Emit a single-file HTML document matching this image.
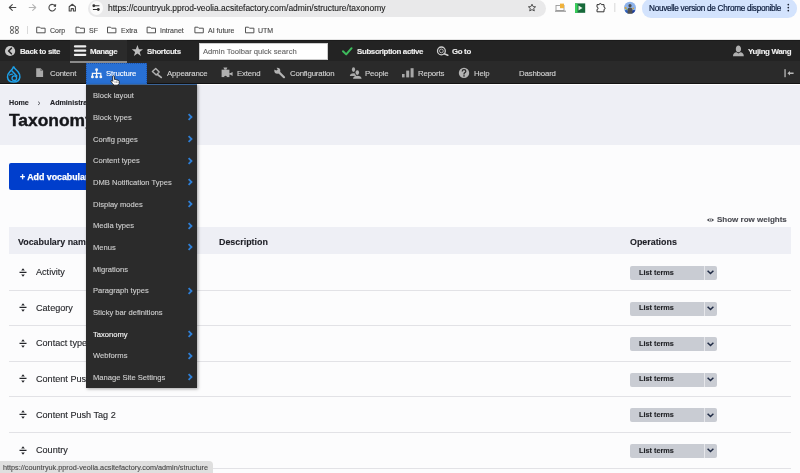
<!DOCTYPE html>
<html><head><meta charset="utf-8">
<style>
*{margin:0;padding:0;box-sizing:border-box}
html,body{width:800px;height:473px;overflow:hidden;background:#fcfcfd;font-family:"Liberation Sans",sans-serif;position:relative}
.a,.mi,.lt .t{will-change:transform;-webkit-text-stroke:0.12px currentColor}
.a{position:absolute;white-space:nowrap}
/* chrome */
#chrome{position:absolute;left:0;top:0;width:800px;height:40px;background:#fdfdfd;border-bottom:1px solid #e4e4e4}
#url{position:absolute;left:87.5px;top:-0.5px;width:458px;height:17px;border-radius:8.5px;background:#e9e9ea}
#urlcirc{position:absolute;left:89.5px;top:1px;width:13.5px;height:13.5px;border-radius:50%;background:#fafafa}
#urltxt{left:107.5px;top:2px;font-size:8.45px;line-height:12px;color:#1f1f1f}
.bm{font-size:7px;color:#474747;top:25.5px;line-height:9px}
#pill{position:absolute;left:642px;top:-1px;width:155px;height:18.5px;border-radius:9px;background:#d3e3fd}
#pilltxt{left:649px;top:2.6px;font-size:8.2px;letter-spacing:-0.28px;line-height:11px;color:#0a1a3a;-webkit-text-stroke:0.2px #0a1a3a}
/* toolbar */
#tb1{position:absolute;left:0;top:40px;width:800px;height:21px;background:#232323;border-top:1px solid #1b1b1b}
#tb2{position:absolute;left:0;top:61px;width:800px;height:23.4px;background:#2a2a2a;border-bottom:1px solid #131313}
.t1{font-size:7.9px;letter-spacing:-0.35px;font-weight:bold;color:#f0f0f0;top:46.8px;line-height:9px}
.t2{font-size:7.8px;letter-spacing:-0.15px;color:#d2d2d2;top:68.8px;line-height:9px}
#manage{position:absolute;left:69.5px;top:40px;width:57.5px;height:21px;background:#2b2b2b}
#managebar{position:absolute;left:69.5px;top:61px;width:57.5px;height:1.6px;background:#8a8a8a}
#search{position:absolute;left:199px;top:43px;width:129px;height:17px;background:#fff;border:1px solid #ccc}
#structtab{position:absolute;left:86px;top:62.5px;width:61px;height:22px;background:#2870d4;outline:1px dotted #1c52a8;outline-offset:-1px}
/* page */
#hdr{position:absolute;left:0;top:84.4px;width:800px;height:60.6px;background:#eeeff5;border-top:1.6px solid #fff}
#bc{left:9px;top:98.8px;font-size:7.15px;font-weight:bold;color:#232429;line-height:9px}
#title{left:9.3px;top:110.2px;font-size:17.4px;font-weight:bold;color:#15161a;line-height:20px;-webkit-text-stroke:0.4px #15161a}
#addbtn{position:absolute;left:9px;top:163px;width:120px;height:27px;background:#003ecc;border-radius:2px}
#addtxt{left:20px;top:171.8px;font-size:8.8px;font-weight:bold;color:#fff;line-height:10px;-webkit-text-stroke:0.25px #fff}
#srw{left:716.8px;top:215.4px;font-size:8px;font-weight:bold;color:#4a4b52;line-height:9px}
#thead{position:absolute;left:9px;top:227.2px;width:782px;height:26.8px;background:#eeeff5}
.th{font-size:8.9px;font-weight:bold;color:#1e1f26;top:236.6px;line-height:10px}
.row{position:absolute;left:9px;width:782px;height:1px;background:#e2e2e6}
.cell{font-size:9.1px;color:#26272b;line-height:11px;left:36px}
.lt{position:absolute;left:630px;width:87px;height:14px;background:#c9ccd3;border-radius:2px}
.lt .sep{position:absolute;left:74px;top:0;width:1px;height:14px;background:#e6e7eb}
.lt .t{position:absolute;left:9px;top:1.7px;font-size:7.3px;font-weight:bold;color:#1f2024;line-height:9px}
.drag{position:absolute;left:18.5px;width:8px;height:9px}
/* menu */
#menu{position:absolute;left:86px;top:84px;width:111px;height:304px;background:#2b2b2b;border-top:1px solid #3b6498;box-shadow:1px 1px 3px rgba(0,0,0,.35)}
.mi{position:absolute;left:6.7px;font-size:7.6px;color:#cdcdcd;line-height:10px;white-space:nowrap}
.chev{position:absolute;left:101px;width:6px;height:8px}
#status{position:absolute;left:0;top:461px;width:213px;height:13px;background:#dfdfdf;border-radius:0 4px 0 0}
#stattxt{left:3px;top:462.6px;font-size:7.25px;color:#4a4a4a;line-height:9px}
</style></head><body>
<div id="chrome"></div>
<div id="url"></div>
<div id="urlcirc"></div>
<div class="a" id="urltxt">https://countryuk.pprod-veolia.acsitefactory.com/admin/structure/taxonomy</div>
<div class="a bm" style="left:50px">Corp</div>
<div class="a bm" style="left:89px">SF</div>
<div class="a bm" style="left:121px">Extra</div>
<div class="a bm" style="left:160px">Intranet</div>
<div class="a bm" style="left:208px">AI future</div>
<div class="a bm" style="left:258px">UTM</div>
<div id="pill"></div>
<svg class="a" style="left:0;top:0" width="800" height="40" viewBox="0 0 800 40">
 <g fill="none" stroke="#474747" stroke-width="1.1" stroke-linecap="round" stroke-linejoin="round">
  <path d="M15.8 7.5H9.3M12.3 4.6L9.3 7.5L12.3 10.4"/>
  <path d="M29.2 7.5H35.7M32.7 4.6L35.7 7.5L32.7 10.4" stroke="#b5b5b5"/>
  <path d="M55.2 6.2A3.3 3.3 0 1 0 55.4 8.6"/>
  <path d="M69.2 11V6.8L72.3 4.3L75.4 6.8V11H73.4V8.6H71.2V11Z"/>
  <path d="M93.5 5.75H99M93.3 9.5H98.5" stroke="#333" stroke-width="1"/>
 </g>
 <path d="M54.2 4.6L56.2 4.2L56 6.8L53.6 6.4Z" fill="#474747"/>
 <circle cx="93.8" cy="5.75" r="1.4" fill="#333"/><circle cx="98.3" cy="9.5" r="1.4" fill="#333"/>
 <g fill="none" stroke="#4a4a4a" stroke-width="0.9">
  <rect x="10.5" y="26.5" width="2.9" height="2.9" rx="0.7"/><rect x="15.4" y="26.5" width="2.9" height="2.9" rx="0.7"/>
  <rect x="10.5" y="30.5" width="2.9" height="2.9" rx="0.7"/><rect x="15.4" y="30.5" width="2.9" height="2.9" rx="0.7"/>
 </g>
 <path d="M27.5 26V34" stroke="#d5d5d5" stroke-width="0.9"/>
 <g fill="none" stroke="#4a4a4a" stroke-width="0.95" stroke-linejoin="round">
  <path id="fold" d="M36.7 27.2h3l1 1h4.4v4.6h-8.4z"/>
  <path d="M76 27.2h3l1 1h4.4v4.6h-8.4z"/>
  <path d="M107.5 27.2h3l1 1h4.4v4.6h-8.4z"/>
  <path d="M147.1 27.2h3l1 1h4.4v4.6h-8.4z"/>
  <path d="M194.9 27.2h3l1 1h4.4v4.6h-8.4z"/>
  <path d="M245.5 27.2h3l1 1h4.4v4.6h-8.4z"/>
 </g>
 <path d="M532 4.2L533.1 6.6L535.6 6.8L533.7 8.4L534.3 10.9L532 9.6L529.7 10.9L530.3 8.4L528.4 6.8L530.9 6.6Z" fill="none" stroke="#3f3f3f" stroke-width="0.9" stroke-linejoin="round"/>
 <rect x="556" y="5.5" width="8" height="5" fill="none" stroke="#9a9a9a" stroke-width="0.9"/>
 <path d="M555 11.2H566" stroke="#8a8a8a" stroke-width="1"/>
 <rect x="560" y="3.6" width="4" height="4.6" fill="#f0b23c"/>
 <rect x="575" y="3.4" width="10.2" height="9.4" fill="#16693a"/>
 <path d="M575 3.4h2.6v9.4H575z" fill="#38d05a"/><path d="M578.5 5.5L582.5 8L578.5 10.5Z" fill="#e8f5e8"/>
 <path d="M597 4.6h2.2a1.1 1.1 0 0 1 2.2 0h2.6v2.6a1.1 1.1 0 0 1 0 2.2v2.4h-7v-2.4a1.1 1.1 0 0 0 0-2.2z" fill="none" stroke="#333" stroke-width="1" stroke-linejoin="round"/>
 <path d="M614.8 3V12" stroke="#d8d8d8" stroke-width="1"/>
 <circle cx="630" cy="7.8" r="6" fill="#8db2ea"/>
 <path d="M624.6 10.4Q626.5 9.6 628 10.8L628 13.6A6 6 0 0 1 624.6 10.4Z" fill="#2f5fb8"/>
 <path d="M632 10.6Q634 9.6 635.4 10.4A6 6 0 0 1 632 13.6Z" fill="#1f3f9f"/>
 <circle cx="625.6" cy="8" r="1" fill="#d8a431"/><circle cx="626.8" cy="9.2" r="0.8" fill="#7fb36a"/><circle cx="633.2" cy="8.4" r="0.8" fill="#d8a431"/>
 <circle cx="630" cy="5.7" r="1.6" fill="#4a4a4a"/>
 <path d="M627.6 13.7V9.4Q627.8 7.6 630 7.4Q632.2 7.6 632.4 9.4V13.7Z" fill="#505050"/>
 <circle cx="788.3" cy="4.6" r="0.85" fill="#1d2433"/><circle cx="788.3" cy="7.6" r="0.85" fill="#1d2433"/><circle cx="788.3" cy="10.6" r="0.85" fill="#1d2433"/>
</svg>
<div class="a" id="pilltxt">Nouvelle version de Chrome disponible</div>

<div id="tb1"></div>
<div id="tb2"></div>
<div id="manage"></div>
<div id="managebar"></div>
<div class="a t1" style="left:19.75px">Back to site</div>
<div class="a t1" style="left:89.8px">Manage</div>
<div class="a t1" style="left:146.7px">Shortcuts</div>
<div id="search"></div>
<div class="a" style="left:203px;top:47px;font-size:7.65px;color:#666;line-height:9px">Admin Toolbar quick search</div>
<div class="a t1" style="left:356.8px">Subscription active</div>
<div class="a t1" style="left:452.3px">Go to</div>
<div class="a t1" style="left:748px">Yujing Wang</div>

<div id="structtab"></div>

<svg class="a" style="left:0;top:40px" width="800" height="45" viewBox="0 40 800 45">
 <circle cx="10.1" cy="51" r="5.1" fill="#c8c8c8"/>
 <path d="M11.4 48.2L8.6 51L11.4 53.8" fill="none" stroke="#252525" stroke-width="1.6" stroke-linecap="round" stroke-linejoin="round"/>
 <g stroke="#efefef" stroke-width="2.3" stroke-linecap="round"><path d="M75 46.4H85.2M75 50.7H85.2M75 54.9H85.2"/></g>
 <path d="M137.4 45L138.9 49.2H143L139.7 51.9L140.9 56L137.4 53.5L133.9 56L135.1 51.9L131.8 49.2H135.9Z" fill="#bdbdbd"/>
 <path d="M343 51.2L346.2 54.4L351.6 48.2" fill="none" stroke="#3dbb5c" stroke-width="2" stroke-linecap="round" stroke-linejoin="round"/>
 <circle cx="441.4" cy="50.9" r="3.9" fill="none" stroke="#cfcfcf" stroke-width="1.3"/>
 <circle cx="441.4" cy="50.9" r="1.9" fill="none" stroke="#cfcfcf" stroke-width="0.8"/>
 <path d="M444.2 53.7L447.8 55.2" stroke="#cfcfcf" stroke-width="1.6" stroke-linecap="round"/>
 <circle cx="738.4" cy="49" r="2.6" fill="#b0b0b0"/>
 <path d="M733 56.2Q733 52.5 736.6 52.2L738.4 53.4L740.2 52.2Q743.8 52.5 743.8 56.2Z" fill="#b0b0b0"/>
 <path d="M736.2 48.2Q736.2 45.5 738.4 45.5Q740.6 45.5 740.6 48.2L740.4 51.2Q738.4 53.2 736.4 51.2Z" fill="#b0b0b0"/>
 <!-- drupal drop -->
 <path d="M13.6 66.4C14.3 68.9 16.4 69.8 18 71.7C19.6 73.6 20.1 75.3 19.9 77.1C19.5 80.2 17 82 13.6 82C10.2 82 7.8 80.1 7.5 77.1C7.3 75.1 8.2 73.4 9.8 71.8C11.5 70 13 69 13.6 66.4Z" fill="#27272a" stroke="#1ea1e9" stroke-width="1.5"/>
 <path d="M11.6 70.6L17.2 76.6" stroke="#1ea1e9" stroke-width="1.5"/>
 <path d="M9 75.4Q11 73.6 13 74.2" fill="none" stroke="#1ea1e9" stroke-width="1.2"/>
 <circle cx="14.3" cy="78.2" r="2.3" fill="none" stroke="#1ea1e9" stroke-width="1.3"/>
 <!-- content doc -->
 <path d="M36.2 68.3H40.6L43.1 70.8V77H36.2Z" fill="#a9a9a9"/><path d="M40.4 68.3V71H43.1" fill="#6f6f6f"/>
 <!-- structure sitemap -->
 <g fill="#f6f6f6"><circle cx="96.6" cy="69.8" r="1.45"/><circle cx="92.4" cy="76.9" r="1.45"/><circle cx="96.6" cy="76.9" r="1.45"/><circle cx="100.8" cy="76.9" r="1.45"/></g>
 <path d="M96.6 70.5V76M92.4 76V73.4H100.8V76" fill="none" stroke="#f6f6f6" stroke-width="1.2"/>
 <!-- appearance -->
 <path d="M152.4 71.4L155.7 68.4L159.2 72L156.2 75Z" fill="none" stroke="#b0b0b0" stroke-width="1.4" stroke-linejoin="round"/>
 <path d="M157.8 74.8L161.2 77.4" stroke="#b0b0b0" stroke-width="1.8" stroke-linecap="round"/>
 <!-- extend puzzle -->
 <g fill="#b0b0b0"><rect x="221.6" y="69.7" width="7.8" height="7.4"/><path d="M223.4 67.6H227.4L226.3 69.8H224.5Z"/><path d="M229.3 73.1H230.6L232.6 71.9V75.9L230.6 74.7H229.3Z"/></g>
 <path d="M224 77.2A1.5 1.5 0 0 1 227 77.2Z" fill="#2a2a2a"/>
 <!-- wrench -->
 <circle cx="277.3" cy="70.8" r="3" fill="#b3b3b3"/>
 <path d="M278 71.4L284 77.2" stroke="#b3b3b3" stroke-width="2.2" stroke-linecap="round"/>
 <path d="M273.6 69.2L275.8 67L277.8 69.4L276.4 70.6Z" fill="#2a2a2a"/>
 <!-- people -->
 <g fill="#a9a9a9"><ellipse cx="353.5" cy="69.6" rx="1.6" ry="2.3"/><path d="M349.8 76Q350 73.6 353.5 73.3Q355.4 73.4 356 74.2V76Z"/></g>
 <ellipse cx="357.3" cy="72.7" rx="2.3" ry="2.9" fill="#2a2a2a"/>
 <g fill="#b0b0b0"><ellipse cx="357.3" cy="72.6" rx="1.8" ry="2.4"/><path d="M353 78.8Q353.3 75.9 357.3 75.7Q361.3 75.9 361.6 78.8Z"/></g>
 <!-- reports -->
 <rect x="402" y="74" width="2.6" height="3.4" fill="#a7a7a7"/><rect x="406.2" y="70.6" width="3" height="6.8" fill="#a7a7a7"/><rect x="410.6" y="68.2" width="3" height="9.2" fill="#a7a7a7"/>
 <!-- help -->
 <circle cx="464" cy="72.9" r="5.2" fill="#b4b4b4"/>
 <path d="M462.2 71.4Q462.2 69.6 464 69.6Q465.8 69.6 465.8 71.2Q465.8 72.3 464.6 72.8Q464 73.1 464 74.4" fill="none" stroke="#2a2a2a" stroke-width="1.3"/>
 <rect x="463.3" y="75.2" width="1.4" height="1.4" fill="#2a2a2a"/>
 <!-- collapse -->
 <rect x="784.4" y="69.2" width="1.3" height="8" fill="#b8b8b8"/>
 <path d="M787.4 73.2L790 71V72.4H793.6V74H790V75.4Z" fill="#b8b8b8"/>
</svg>
<div class="a t2" style="left:49.7px">Content</div>
<div class="a t2" style="left:106px;color:#fff">Structure</div>
<div class="a t2" style="left:166.75px">Appearance</div>
<div class="a t2" style="left:236.75px">Extend</div>
<div class="a t2" style="left:289.5px">Configuration</div>
<div class="a t2" style="left:365.3px">People</div>
<div class="a t2" style="left:417.8px">Reports</div>
<div class="a t2" style="left:474px">Help</div>
<div class="a t2" style="left:518.8px">Dashboard</div>

<div id="hdr"></div>
<div class="a" id="bc">Home</div>
<svg class="a" style="left:36px;top:100px" width="6" height="7" viewBox="0 0 6 7"><path d="M2 1.6L4 3.3L2 5" fill="none" stroke="#55565d" stroke-width="0.9"/></svg>
<div class="a" id="bc2" style="left:49.5px;top:98.8px;font-size:7.15px;font-weight:bold;color:#232429;line-height:9px">Administration</div>
<div class="a" id="title">Taxonomy</div>
<div id="addbtn"></div>
<div class="a" id="addtxt">+ Add vocabulary</div>
<svg class="a" style="left:706px;top:217px" width="9" height="6" viewBox="0 0 9 6"><path d="M0.8 3Q4.5 -0.6 8.2 3Q4.5 6.6 0.8 3Z" fill="#4a4b52"/><circle cx="4.5" cy="3" r="1.4" fill="#fcfcfd"/><circle cx="4.5" cy="3" r="0.7" fill="#4a4b52"/></svg>
<div class="a" id="srw">Show row weights</div>
<div id="thead"></div>
<div class="a th" style="left:18px">Vocabulary name</div>
<div class="a th" style="left:218.5px">Description</div>
<div class="a th" style="left:630px">Operations</div>

<div id="rows">
<div class="a cell" style="top:267.10px">Activity</div>
<svg class="drag" style="top:267.50px" viewBox="0 0 8 9"><path d="M4 0.3 L5.8 2.6 H2.2 Z M0.5 3.8 H7.5 V5.1 H0.5 Z M2.2 6.4 H5.8 L4 8.7 Z" fill="#232429"/></svg>
<div class="lt" style="top:266.00px"><div class="t">List terms</div><div class="sep"></div><svg style="position:absolute;left:77px;top:4.4px" width="7" height="5" viewBox="0 0 7 5"><path d="M0.6 0.7 L3.5 3.5 L6.4 0.7" stroke="#1f2a44" stroke-width="1.5" fill="none"/></svg></div>
<div class="row" style="top:289.50px"></div>
<div class="a cell" style="top:302.70px">Category</div>
<svg class="drag" style="top:303.10px" viewBox="0 0 8 9"><path d="M4 0.3 L5.8 2.6 H2.2 Z M0.5 3.8 H7.5 V5.1 H0.5 Z M2.2 6.4 H5.8 L4 8.7 Z" fill="#232429"/></svg>
<div class="lt" style="top:301.60px"><div class="t">List terms</div><div class="sep"></div><svg style="position:absolute;left:77px;top:4.4px" width="7" height="5" viewBox="0 0 7 5"><path d="M0.6 0.7 L3.5 3.5 L6.4 0.7" stroke="#1f2a44" stroke-width="1.5" fill="none"/></svg></div>
<div class="row" style="top:325.10px"></div>
<div class="a cell" style="top:338.30px">Contact type</div>
<svg class="drag" style="top:338.70px" viewBox="0 0 8 9"><path d="M4 0.3 L5.8 2.6 H2.2 Z M0.5 3.8 H7.5 V5.1 H0.5 Z M2.2 6.4 H5.8 L4 8.7 Z" fill="#232429"/></svg>
<div class="lt" style="top:337.20px"><div class="t">List terms</div><div class="sep"></div><svg style="position:absolute;left:77px;top:4.4px" width="7" height="5" viewBox="0 0 7 5"><path d="M0.6 0.7 L3.5 3.5 L6.4 0.7" stroke="#1f2a44" stroke-width="1.5" fill="none"/></svg></div>
<div class="row" style="top:360.70px"></div>
<div class="a cell" style="top:373.90px">Content Push</div>
<svg class="drag" style="top:374.30px" viewBox="0 0 8 9"><path d="M4 0.3 L5.8 2.6 H2.2 Z M0.5 3.8 H7.5 V5.1 H0.5 Z M2.2 6.4 H5.8 L4 8.7 Z" fill="#232429"/></svg>
<div class="lt" style="top:372.80px"><div class="t">List terms</div><div class="sep"></div><svg style="position:absolute;left:77px;top:4.4px" width="7" height="5" viewBox="0 0 7 5"><path d="M0.6 0.7 L3.5 3.5 L6.4 0.7" stroke="#1f2a44" stroke-width="1.5" fill="none"/></svg></div>
<div class="row" style="top:396.30px"></div>
<div class="a cell" style="top:409.50px">Content Push Tag 2</div>
<svg class="drag" style="top:409.90px" viewBox="0 0 8 9"><path d="M4 0.3 L5.8 2.6 H2.2 Z M0.5 3.8 H7.5 V5.1 H0.5 Z M2.2 6.4 H5.8 L4 8.7 Z" fill="#232429"/></svg>
<div class="lt" style="top:408.40px"><div class="t">List terms</div><div class="sep"></div><svg style="position:absolute;left:77px;top:4.4px" width="7" height="5" viewBox="0 0 7 5"><path d="M0.6 0.7 L3.5 3.5 L6.4 0.7" stroke="#1f2a44" stroke-width="1.5" fill="none"/></svg></div>
<div class="row" style="top:431.90px"></div>
<div class="a cell" style="top:445.10px">Country</div>
<svg class="drag" style="top:445.50px" viewBox="0 0 8 9"><path d="M4 0.3 L5.8 2.6 H2.2 Z M0.5 3.8 H7.5 V5.1 H0.5 Z M2.2 6.4 H5.8 L4 8.7 Z" fill="#232429"/></svg>
<div class="lt" style="top:444.00px"><div class="t">List terms</div><div class="sep"></div><svg style="position:absolute;left:77px;top:4.4px" width="7" height="5" viewBox="0 0 7 5"><path d="M0.6 0.7 L3.5 3.5 L6.4 0.7" stroke="#1f2a44" stroke-width="1.5" fill="none"/></svg></div>
<div class="row" style="top:467.50px"></div>
</div>

<div id="menu">
<div class="mi" style="top:6.25px">Block layout</div>
<div class="mi" style="top:27.93px">Block types</div>
<svg class="chev" style="top:28.33px" viewBox="0 0 6 8"><path d="M1.6 1.1 L4.5 4 L1.6 6.9" stroke="#2f80d8" stroke-width="1.8" fill="none"/></svg>
<div class="mi" style="top:49.61px">Config pages</div>
<svg class="chev" style="top:50.01px" viewBox="0 0 6 8"><path d="M1.6 1.1 L4.5 4 L1.6 6.9" stroke="#2f80d8" stroke-width="1.8" fill="none"/></svg>
<div class="mi" style="top:71.29px">Content types</div>
<svg class="chev" style="top:71.69px" viewBox="0 0 6 8"><path d="M1.6 1.1 L4.5 4 L1.6 6.9" stroke="#2f80d8" stroke-width="1.8" fill="none"/></svg>
<div class="mi" style="top:92.97px">DMB Notification Types</div>
<svg class="chev" style="top:93.37px" viewBox="0 0 6 8"><path d="M1.6 1.1 L4.5 4 L1.6 6.9" stroke="#2f80d8" stroke-width="1.8" fill="none"/></svg>
<div class="mi" style="top:114.65px">Display modes</div>
<svg class="chev" style="top:115.05px" viewBox="0 0 6 8"><path d="M1.6 1.1 L4.5 4 L1.6 6.9" stroke="#2f80d8" stroke-width="1.8" fill="none"/></svg>
<div class="mi" style="top:136.33px">Media types</div>
<svg class="chev" style="top:136.73px" viewBox="0 0 6 8"><path d="M1.6 1.1 L4.5 4 L1.6 6.9" stroke="#2f80d8" stroke-width="1.8" fill="none"/></svg>
<div class="mi" style="top:158.01px">Menus</div>
<svg class="chev" style="top:158.41px" viewBox="0 0 6 8"><path d="M1.6 1.1 L4.5 4 L1.6 6.9" stroke="#2f80d8" stroke-width="1.8" fill="none"/></svg>
<div class="mi" style="top:179.69px">Migrations</div>
<div class="mi" style="top:201.37px">Paragraph types</div>
<svg class="chev" style="top:201.77px" viewBox="0 0 6 8"><path d="M1.6 1.1 L4.5 4 L1.6 6.9" stroke="#2f80d8" stroke-width="1.8" fill="none"/></svg>
<div class="mi" style="top:223.05px">Sticky bar definitions</div>
<div class="mi" style="top:244.73px;color:#f6f6f6">Taxonomy</div>
<svg class="chev" style="top:245.13px" viewBox="0 0 6 8"><path d="M1.6 1.1 L4.5 4 L1.6 6.9" stroke="#2f80d8" stroke-width="1.8" fill="none"/></svg>
<div class="mi" style="top:266.41px">Webforms</div>
<svg class="chev" style="top:266.81px" viewBox="0 0 6 8"><path d="M1.6 1.1 L4.5 4 L1.6 6.9" stroke="#2f80d8" stroke-width="1.8" fill="none"/></svg>
<div class="mi" style="top:288.09px">Manage Site Settings</div>
<svg class="chev" style="top:288.49px" viewBox="0 0 6 8"><path d="M1.6 1.1 L4.5 4 L1.6 6.9" stroke="#2f80d8" stroke-width="1.8" fill="none"/></svg>
</div>
<div id="status"></div>
<div class="a" id="stattxt">https://countryuk.pprod-veolia.acsitefactory.com/admin/structure</div>
<svg class="a" style="left:110px;top:75px" width="11" height="11" viewBox="0 0 11 11"><path d="M2.6 1.2Q3.6 0.4 4.3 1.3L4.6 4.6Q5.4 4.2 6.2 4.8Q7.2 4.6 7.8 5.3Q9 5.2 9.3 6.4L9.2 8.6Q8.6 10.2 7 10.2H4.6Q3.2 9.8 2.2 8.2L1 6.4Q0.9 5.4 2 5.6L2.8 6.4Z" fill="#fff" stroke="#111" stroke-width="0.8" stroke-linejoin="round"/><path d="M5 6.2V8M6.6 6.2V8M8 6.4V8" stroke="#555" stroke-width="0.5"/></svg>
</body></html>
